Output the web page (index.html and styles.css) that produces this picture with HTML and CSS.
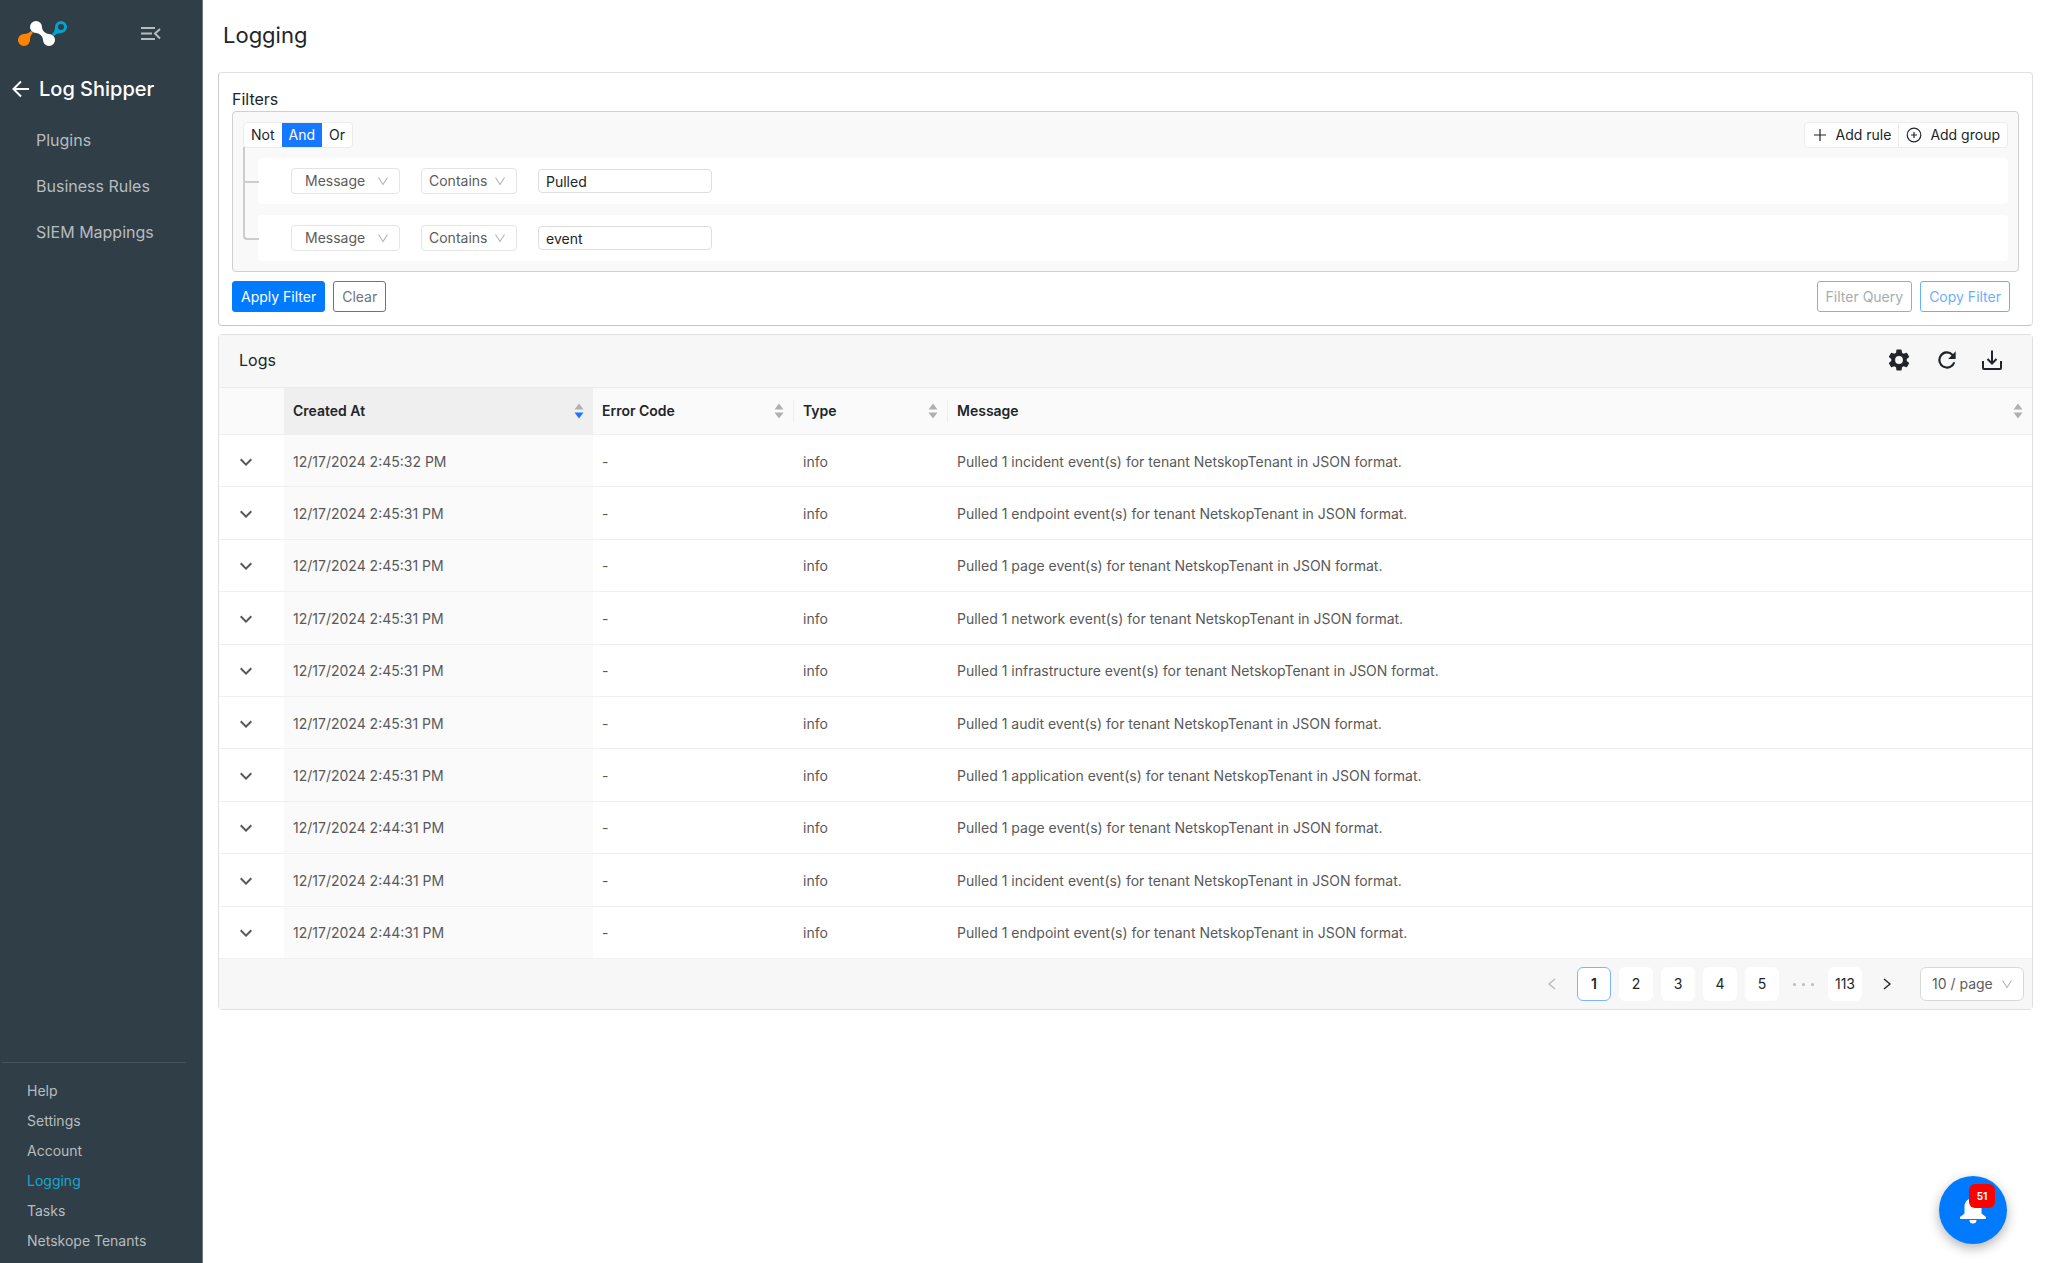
FILE: index.html
```
<!DOCTYPE html>
<html lang="en">
<head>
  <meta charset="UTF-8" />
  <meta name="viewport" content="width=device-width, initial-scale=1" />
  <title>Logging</title>
  <link rel="stylesheet" href="styles.css">
</head>
<body>
  <svg class="defs" aria-hidden="true">
    <symbol id="down" viewBox="0 0 12 12"><path d="M1.500 2.500 6 9.500l4.500-7" fill="none" stroke="currentColor" stroke-width="1.100" /></symbol>
    <symbol id="expand" viewBox="0 0 24 24"><path d="M7.410 8.590 12 13.170l4.590-4.580L18 10l-6 6-6-6z" fill="currentColor" /></symbol>
    <symbol id="sort" viewBox="0 0 10 16"><path class="up" d="M5 0.500 9.500 6.500h-9z" /><path class="dn" d="M5 15.500 9.500 9.500h-9z" /></symbol>
  </svg>

  <aside class="sidebar">
    <div class="brand">
      <svg class="logo" width="50" height="26" viewBox="0 0 50 26" aria-hidden="true">
        <path d="M13 10l2 2c-3 3-3 5-3 7a6 6 0 1 1-6-6c3 0 5-1 7-3z" fill="#ff8400" />
        <path d="M36 15l-2-2c2-2 3-4 3-7a6 6 0 1 1 6 6c-3 0-5 1-7 3z" fill="#00a5cf" />
        <circle cx="43" cy="6" r="3" fill="#303e47" />
        <path d="M18 0a6 6 0 0 1 6 6c0 4 4 7 7 7a6 6 0 1 1-6 6c0-4-4-7-7-7a6 6 0 0 1 0-12z" fill="#fff" />
      </svg>
      <button class="icon-button collapse" aria-label="Collapse menu">
        <svg width="20" height="14" viewBox="0 0 20 14"><path d="M0 1h14M0 6.500h11M0 12h14M19 2l-5 4.500 5 5" fill="none" stroke="currentColor" stroke-width="2" /></svg>
      </button>
    </div>
    <a class="back" href="#">
      <svg width="18" height="18" viewBox="0 0 18 18"><path d="M17 9H2M9 1.500 1.500 9 9 16.500" fill="none" stroke="currentColor" stroke-width="2" /></svg>
      Log Shipper
    </a>
    <nav class="menu">
      <a href="#">Plugins</a>
      <a href="#">Business Rules</a>
      <a href="#">SIEM Mappings</a>
    </nav>
    <nav class="bottom-menu">
      <a href="#">Help</a>
      <a href="#">Settings</a>
      <a href="#">Account</a>
      <a class="active" href="#">Logging</a>
      <a href="#">Tasks</a>
      <a href="#">Netskope Tenants</a>
    </nav>
  </aside>

  <main class="content">
    <h1>Logging</h1>

    <section class="card filters">
      <h2>Filters</h2>
      <div class="query">
        <div class="query-head">
          <div class="group">
            <button>Not</button>
            <button class="on">And</button>
            <button>Or</button>
          </div>
          <div class="group actions">
            <button><svg width="16" height="16" viewBox="0 0 16 16"><path d="M8 2v12M2 8h12" fill="none" stroke="currentColor" stroke-width="1.200" /></svg>Add rule</button>
            <button><svg width="16" height="16" viewBox="0 0 16 16"><circle cx="8" cy="8" r="6.800" fill="none" stroke="currentColor" stroke-width="1.200" /><path d="M8 5v6M5 8h6" stroke="currentColor" stroke-width="1.200" /></svg>Add group</button>
          </div>
        </div>
        <div class="rules">
          <div class="rule">
            <label class="select field"><select aria-label="Field"><option>Message</option></select><svg width="12" height="12"><use href="#down" /></svg></label>
            <label class="select operator"><select aria-label="Operator"><option>Contains</option></select><svg width="12" height="12"><use href="#down" /></svg></label>
            <input type="text" aria-label="Value" value="Pulled">
          </div>
          <div class="rule">
            <label class="select field"><select aria-label="Field"><option>Message</option></select><svg width="12" height="12"><use href="#down" /></svg></label>
            <label class="select operator"><select aria-label="Operator"><option>Contains</option></select><svg width="12" height="12"><use href="#down" /></svg></label>
            <input type="text" aria-label="Value" value="event">
          </div>
        </div>
      </div>
      <div class="filter-buttons">
        <button class="button primary">Apply Filter</button>
        <button class="button secondary">Clear</button>
        <button class="button secondary faded push">Filter Query</button>
        <button class="button outline faded">Copy Filter</button>
      </div>
    </section>

    <section class="card logs">
      <div class="logs-head">
        <h2>Logs</h2>
        <div class="tools">
          <button class="icon-button" aria-label="Table settings">
            <svg width="26" height="26" viewBox="0 0 24 24"><path fill="currentColor" d="M19.140 12.940c.04-.3.06-.61.06-.94s-.02-.64-.07-.94l2.030-1.580a.49.49 0 0 0 .12-.61l-1.920-3.320a.49.49 0 0 0-.59-.22l-2.390.96a7 7 0 0 0-1.620-.94l-.36-2.540A.48.48 0 0 0 13.920 2.400h-3.840a.48.48 0 0 0-.47.41l-.36 2.540c-.59.24-1.130.57-1.620.94l-2.390-.96a.48.48 0 0 0-.59.22L2.740 8.870a.48.48 0 0 0 .12.61l2.030 1.580c-.05.3-.09.63-.09.94s.02.64.07.94l-2.030 1.580a.49.49 0 0 0-.12.61l1.920 3.320c.12.22.37.29.59.22l2.390-.96c.5.38 1.030.7 1.620.94l.36 2.540c.05.24.24.41.48.41h3.840c.24 0 .44-.17.47-.41l.36-2.540c.59-.24 1.130-.56 1.620-.94l2.390.96c.22.08.47 0 .59-.22l1.920-3.320a.48.48 0 0 0-.12-.61zM12 15.600a3.600 3.600 0 1 1 0-7.200 3.600 3.600 0 0 1 0 7.200z" /></svg>
          </button>
          <button class="icon-button" aria-label="Refresh">
            <svg width="26" height="26" viewBox="0 0 24 24"><path fill="currentColor" d="M17.650 6.350A8 8 0 1 0 19.730 14h-2.080A6 6 0 1 1 12 6c1.660 0 3.140.69 4.220 1.780L13 11h7V4z" /></svg>
          </button>
          <button class="icon-button" aria-label="Download">
            <svg width="20" height="20" viewBox="0 0 20 20"><path fill="none" stroke="currentColor" stroke-width="2" d="M1 11v7a1 1 0 0 0 1 1h16a1 1 0 0 0 1-1v-7M10 0.500v13M5.500 9 10 13.500 14.500 9" /></svg>
          </button>
        </div>
      </div>

      <table>
        <colgroup><col class="c-expand"><col class="c-created"><col class="c-code"><col class="c-type"><col></colgroup>
        <thead>
          <tr>
            <th></th>
            <th class="sorted"><div>Created At<svg width="10" height="16"><use href="#sort" /></svg></div></th>
            <th><div>Error Code<svg width="10" height="16"><use href="#sort" /></svg></div></th>
            <th><div>Type<svg width="10" height="16"><use href="#sort" /></svg></div></th>
            <th><div>Message<svg width="10" height="16"><use href="#sort" /></svg></div></th>
          </tr>
        </thead>
        <tbody>
          <tr><td><button class="icon-button" aria-label="Expand row"><svg width="24" height="24"><use href="#expand" /></svg></button></td><td>12/17/2024 2:45:32 PM</td><td>-</td><td>info</td><td>Pulled 1 incident event(s) for tenant NetskopTenant in JSON format.</td></tr>
          <tr><td><button class="icon-button" aria-label="Expand row"><svg width="24" height="24"><use href="#expand" /></svg></button></td><td>12/17/2024 2:45:31 PM</td><td>-</td><td>info</td><td>Pulled 1 endpoint event(s) for tenant NetskopTenant in JSON format.</td></tr>
          <tr><td><button class="icon-button" aria-label="Expand row"><svg width="24" height="24"><use href="#expand" /></svg></button></td><td>12/17/2024 2:45:31 PM</td><td>-</td><td>info</td><td>Pulled 1 page event(s) for tenant NetskopTenant in JSON format.</td></tr>
          <tr><td><button class="icon-button" aria-label="Expand row"><svg width="24" height="24"><use href="#expand" /></svg></button></td><td>12/17/2024 2:45:31 PM</td><td>-</td><td>info</td><td>Pulled 1 network event(s) for tenant NetskopTenant in JSON format.</td></tr>
          <tr><td><button class="icon-button" aria-label="Expand row"><svg width="24" height="24"><use href="#expand" /></svg></button></td><td>12/17/2024 2:45:31 PM</td><td>-</td><td>info</td><td>Pulled 1 infrastructure event(s) for tenant NetskopTenant in JSON format.</td></tr>
          <tr><td><button class="icon-button" aria-label="Expand row"><svg width="24" height="24"><use href="#expand" /></svg></button></td><td>12/17/2024 2:45:31 PM</td><td>-</td><td>info</td><td>Pulled 1 audit event(s) for tenant NetskopTenant in JSON format.</td></tr>
          <tr><td><button class="icon-button" aria-label="Expand row"><svg width="24" height="24"><use href="#expand" /></svg></button></td><td>12/17/2024 2:45:31 PM</td><td>-</td><td>info</td><td>Pulled 1 application event(s) for tenant NetskopTenant in JSON format.</td></tr>
          <tr><td><button class="icon-button" aria-label="Expand row"><svg width="24" height="24"><use href="#expand" /></svg></button></td><td>12/17/2024 2:44:31 PM</td><td>-</td><td>info</td><td>Pulled 1 page event(s) for tenant NetskopTenant in JSON format.</td></tr>
          <tr><td><button class="icon-button" aria-label="Expand row"><svg width="24" height="24"><use href="#expand" /></svg></button></td><td>12/17/2024 2:44:31 PM</td><td>-</td><td>info</td><td>Pulled 1 incident event(s) for tenant NetskopTenant in JSON format.</td></tr>
          <tr><td><button class="icon-button" aria-label="Expand row"><svg width="24" height="24"><use href="#expand" /></svg></button></td><td>12/17/2024 2:44:31 PM</td><td>-</td><td>info</td><td>Pulled 1 endpoint event(s) for tenant NetskopTenant in JSON format.</td></tr>
        </tbody>
      </table>

      <div class="pagination">
        <button class="arrow" disabled aria-label="Previous page"><svg width="10" height="12" viewBox="0 0 10 12"><path d="M8 1 2 6l6 5" fill="none" stroke="currentColor" stroke-width="1.400" /></svg></button>
        <button class="page current">1</button>
        <button class="page">2</button>
        <button class="page">3</button>
        <button class="page">4</button>
        <button class="page">5</button>
        <span class="dots"><i></i><i></i><i></i></span>
        <button class="page">113</button>
        <button class="arrow" aria-label="Next page"><svg width="10" height="12" viewBox="0 0 10 12"><path d="M2 1l6 5-6 5" fill="none" stroke="currentColor" stroke-width="1.400" /></svg></button>
        <label class="select page-size"><select aria-label="Page size"><option>10 / page</option></select><svg width="12" height="12"><use href="#down" /></svg></label>
      </div>
    </section>
  </main>

  <button class="bell" aria-label="Notifications">
    <svg width="26" height="28" viewBox="0 0 26 28"><path fill="currentColor" d="M13 0a2 2 0 0 1 2 2.200c4 1 6.500 4.300 6.500 8.300v7L26 21v2H0v-2l4.500-3.500v-7c0-4 2.500-7.300 6.500-8.300A2 2 0 0 1 13 0zM9.500 24h7a3.500 3.500 0 0 1-7 0z" /></svg>
    <span class="badge">51</span>
  </button>
</body>
</html>
```
FILE: styles.css
```
* {
  box-sizing: border-box;
}
body {
  margin: 0;
  min-height: 100vh;
  display: flex;
  font-family: Inter, "Liberation Sans", sans-serif;
  font-size: 14px;
  line-height: 22px;
  color: #212529;
  background: #fff;
}
h1, h2 {
  margin: 0;
  font-weight: 400;
}
a {
  text-decoration: none;
}
button, input, select {
  margin: 0;
  font: inherit;
  color: inherit;
}
button {
  cursor: pointer;
}
svg {
  display: block;
}
.defs {
  position: absolute;
  width: 0;
  height: 0;
}
.icon-button {
  padding: 0;
  border: none;
  background: none;
}

/* sidebar */
.sidebar {
  width: 203px;
  flex-shrink: 0;
  display: flex;
  flex-direction: column;
  background: #303e47;
  border-right: 1px solid #6d7880;
  color: #b8bcbf;
}
.brand {
  display: flex;
  justify-content: space-between;
  padding: 21px 41px 0 18px;
}
.collapse {
  align-self: center;
}
.back {
  display: flex;
  align-items: center;
  gap: 9px;
  margin-top: 28px;
  padding-left: 12px;
  font-size: 20px;
  font-weight: 500;
  line-height: 28px;
  color: #fff;
}
.menu {
  display: flex;
  flex-direction: column;
  margin-top: 14px;
  font-size: 16px;
  line-height: 46px;
}
.menu a {
  padding-left: 36px;
  color: inherit;
}
.bottom-menu {
  display: flex;
  flex-direction: column;
  margin: auto 16px 7px 2px;
  padding-top: 13px;
  border-top: 1px solid #46545c;
  line-height: 30px;
}
.bottom-menu a {
  padding-left: 25px;
  color: inherit;
}
.bottom-menu a.active {
  color: #12a9d4;
}

/* page */
.content {
  flex: 1;
  min-width: 0;
  padding: 0 15px;
}
h1 {
  padding: 19px 5px 21px;
  font-size: 22px;
  line-height: 32px;
}
h2 {
  font-size: 16px;
  line-height: 24px;
}
.card {
  border: 1px solid #e0e0e0;
  border-radius: 4px;
}
.filters {
  margin-bottom: 8px;
  padding: 14px 13px 13px;
  border-left-color: #ccc;
  border-bottom-color: #c6c6c6;
}
.query {
  padding: 10px;
  background: #f9f9f9;
  border: 1px solid #d0d0d0;
  border-radius: 4px;
}
.query-head {
  display: flex;
  justify-content: space-between;
}
.group {
  display: flex;
  border: 1px solid #ececec;
  border-radius: 4px;
  background: #fff;
  overflow: hidden;
}
.group button {
  height: 24px;
  padding: 0 7px;
  border: none;
  background: none;
}
.group .on {
  background: #1677ff;
  color: #fff;
}
.actions button {
  display: flex;
  align-items: center;
  gap: 8px;
}
.actions button + button {
  border-left: 1px solid #ececec;
}
.rules {
  display: flex;
  flex-direction: column;
  gap: 11px;
  margin-top: 10px;
  padding-left: 15px;
}
.rule {
  position: relative;
  display: flex;
  align-items: center;
  gap: 21px;
  height: 46px;
  padding-left: 33px;
  background: #fff;
  border-radius: 4px;
}
/* tree connector */
.rule::before {
  content: "";
  position: absolute;
  top: -11px;
  left: -15px;
  width: 14px;
  height: 34px;
  border-left: 2px solid #ccc;
  border-bottom: 2px solid #ccc;
}
.rule:last-child::before {
  top: -33px;
  height: 56px;
  border-bottom-left-radius: 4px;
}
.rule input {
  width: 174px;
  height: 24px;
  padding: 0 7px;
  border: 1px solid #dedede;
  border-radius: 4px;
}
.select {
  position: relative;
  display: block;
}
.select select {
  appearance: none;
  width: 100%;
  height: 26px;
  padding: 0 7px;
  border: 1px solid #e4e4e4;
  border-radius: 4px;
  background: #fff;
  color: #5c5c5c;
}
.select svg {
  position: absolute;
  top: 0;
  bottom: 0;
  right: 11px;
  margin: auto 0;
  color: #b5b5b5;
  pointer-events: none;
}
.field {
  width: 109px;
}
.field select {
  padding-left: 13px;
}
.operator {
  width: 96px;
}
.filter-buttons {
  display: flex;
  gap: 8px;
  margin-top: 9px;
  padding-right: 9px;
}
.button {
  height: 31px;
  padding: 0 8px;
  border: 1px solid;
  border-radius: 3px;
  background: #fff;
}
.primary {
  background: #007bff;
  border-color: #007bff;
  color: #fff;
}
.secondary {
  color: #6c757d;
}
.outline {
  color: #007bff;
}
.faded {
  opacity: 0.6;
}
.push {
  margin-left: auto;
}

/* logs table */
.logs-head {
  display: flex;
  align-items: center;
  justify-content: space-between;
  height: 53px;
  padding: 0 30px 3px 20px;
  background: #f7f7f7;
  border-bottom: 1px solid #ececec;
}
.tools {
  display: flex;
  align-items: center;
  gap: 22px;
}
table {
  width: 100%;
  height: 571px;
  table-layout: fixed;
  border-spacing: 0;
}
.c-expand {
  width: 65px;
}
.c-created {
  width: 309px;
}
.c-code {
  width: 201px;
}
.c-type {
  width: 154px;
}
th {
  height: 47px;
  padding: 0;
  background: #fafafa;
  border-bottom: 1px solid #f0f0f0;
  font-weight: 600;
  text-align: left;
}
th div {
  display: flex;
  align-items: center;
  justify-content: space-between;
  padding: 0 9px;
}
th:nth-child(3) div, th:nth-child(4) div {
  border-right: 1px solid #eee;
}
th svg {
  fill: #b0b0b0;
}
th.sorted {
  background: #efefef;
}
.sorted svg {
  --down: #1677ff;
}
.dn {
  fill: var(--down, #b0b0b0);
}
td {
  padding: 2px 9px 0;
  border-bottom: 1px solid #f0f0f0;
  color: #595959;
}
td:first-child {
  padding-left: 15px;
}
td .icon-button {
  display: block;
}
td:nth-child(2) {
  background: #fafafa;
}
.pagination {
  display: flex;
  align-items: center;
  justify-content: flex-end;
  gap: 8px;
  height: 50px;
  padding-right: 8px;
  background: #f7f7f7;
}
.page, .arrow {
  min-width: 34px;
  height: 34px;
  padding: 0 6px;
  border: 1px solid transparent;
  border-radius: 6px;
  background: #fff;
}
.current {
  border-color: #7db3ff;
  font-weight: 600;
}
.arrow {
  display: flex;
  align-items: center;
  justify-content: center;
  background: none;
}
.arrow:disabled {
  color: #bbb;
}
.dots {
  display: flex;
  justify-content: center;
  gap: 6px;
  width: 33px;
}
.dots i {
  width: 3px;
  height: 3px;
  border-radius: 50%;
  background: #bbb;
}
.page-size {
  width: 104px;
  margin-left: 8px;
}
.page-size select {
  height: 34px;
  padding-left: 11px;
  border-radius: 6px;
  border-color: #d9d9d9;
}

/* floating notifications button */
.bell {
  position: fixed;
  right: 41px;
  bottom: 19px;
  display: flex;
  align-items: center;
  justify-content: center;
  width: 68px;
  height: 68px;
  padding: 0;
  border: none;
  border-radius: 50%;
  background: #007bff;
  color: #fff;
  box-shadow: 0 4px 12px rgba(0, 0, 0, 0.3);
}
.badge {
  position: absolute;
  top: 8px;
  right: 12px;
  width: 26px;
  border-radius: 6px;
  background: #f00;
  font-size: 10px;
  font-weight: 700;
  line-height: 24px;
}
```
